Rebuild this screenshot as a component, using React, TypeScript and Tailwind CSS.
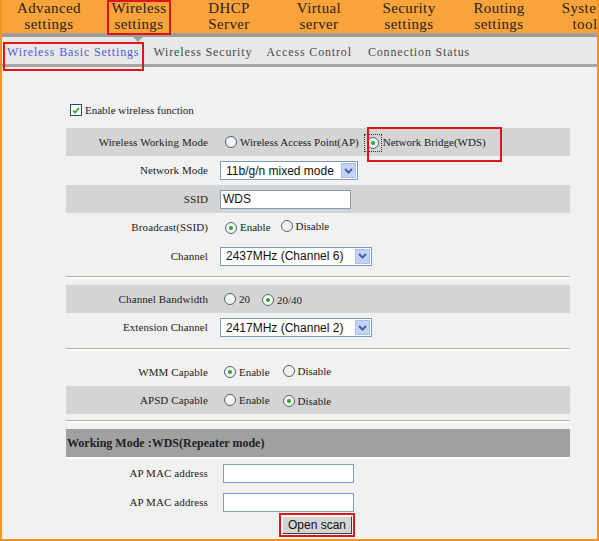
import React from "react";

const Radio = ({ checked }: { checked?: boolean }) => (
  <span className="inline-flex w-[12px] h-[12px] shrink-0 rounded-full border border-[#4a6482] bg-[#f4f4f0] items-center justify-center">
    {checked && <span className="w-[4px] h-[4px] rounded-full bg-[#2ca42c]" />}
  </span>
);

const RadioOpt = ({ checked, label, focus }: { checked?: boolean; label: string; focus?: boolean }) => (
  <span className="inline-flex items-center">
    {focus ? (
      <span className="inline-flex p-[2px] border border-dotted border-[#333]">
        <Radio checked={checked} />
      </span>
    ) : (
      <Radio checked={checked} />
    )}
    <span className={focus ? "ml-[1px]" : "ml-[3px]"}>{label}</span>
  </span>
);

const Chevron = () => (
  <svg width="9" height="6" viewBox="0 0 9 6">
    <path d="M1 1 L4.5 4.5 L8 1" fill="none" stroke="#4d6185" strokeWidth="2" />
  </svg>
);

const Select = ({ value, w }: { value: string; w: string }) => (
  <div className={`relative flex items-center h-[19px] border border-[#7f9db9] bg-white ${w}`}>
    <span className="pl-[5px] text-[12px] text-[#111] font-['Liberation_Sans',Arial,sans-serif] leading-none">
      {value}
    </span>
    <span className="absolute right-[1px] top-[1px] bottom-[1px] w-[15px] bg-[#c1d2fb] border border-[#aac0ee] flex items-center justify-center">
      <Chevron />
    </span>
  </div>
);

const Row = ({ label, gray, h, children, pl }: { label: string; gray?: boolean; h: string; children: React.ReactNode; pl?: string }) => (
  <div className={`flex items-center ${h} ${gray ? "bg-[#d4d4d4]" : ""}`}>
    <div className="w-[142px] text-right shrink-0 tracking-[0.1px]">{label}</div>
    <div className={`flex items-center ${pl ?? "pl-[12px]"}`}>{children}</div>
  </div>
);

const Divider = () => (
  <div>
    <div className="h-px bg-[#b9b29e]" />
    <div className="h-px bg-white" />
  </div>
);

export default function App() {
  const nav = [
    ["Advanced", "settings", "w-[90px]"],
    ["Wireless", "settings", "w-[90px]"],
    ["DHCP", "Server", "w-[90px]"],
    ["Virtual", "server", "w-[90px]"],
    ["Security", "settings", "w-[90px]"],
    ["Routing", "settings", "w-[90px]"],
    ["System", "tool", "w-[82px]"],
  ];
  return (
    <div className="relative w-[599px] h-[541px] overflow-hidden bg-[#f1f1f1] border-x-2 border-b-2 border-[#f39425] font-['Liberation_Serif',serif] text-[#222]">
      {/* top nav */}
      <div className="h-[33px] bg-[#f9a33b] flex pl-[2px] overflow-hidden">
        {nav.map(([a, b, w]) => (
          <div key={a} className={`${w} shrink-0 text-center whitespace-nowrap text-[15px] leading-[16px] tracking-[0.4px] text-[#2a2218]`}>
            <div>{a}</div>
            <div>{b}</div>
          </div>
        ))}
      </div>
      <div className="relative h-[4px] bg-[#9d9d9d]">
        <div className="absolute left-[131px] top-[4px] w-0 h-0 border-l-[5px] border-r-[5px] border-t-[5px] border-l-transparent border-r-transparent border-t-[#9d9d9d]" />
      </div>
      {/* sub nav */}
      <div className="h-[27px] bg-[#e8e8e8] flex items-center pl-[5px] pt-[2px] gap-[14px] text-[12px] tracking-[0.85px] text-[#4a4a4a]">
        <span className="text-[#4d5ed4]">Wireless Basic Settings</span>
        <span>Wireless Security</span>
        <span>Access Control</span>
        <span className="ml-[2px]">Connection Status</span>
      </div>
      <div className="h-[3px] bg-[#a5a5a5]" />

      {/* body */}
      <div className="ml-[64px] w-[504px] text-[11px]">
        <div className="h-[26px] mt-[30px] mb-[5px] flex items-center pl-[4px]">
          <span className="inline-flex w-[12px] h-[12px] border border-[#1c5180] bg-white items-center justify-center">
            <svg width="8" height="7" viewBox="0 0 8 7">
              <path d="M1 3.5 L3 5.5 L7 1" fill="none" stroke="#21a121" strokeWidth="1.6" />
            </svg>
          </span>
          <span className="ml-[3px]">Enable wireless function</span>
        </div>

        <Row label="Wireless Working Mode" gray h="h-[28px]" pl="pl-[17px]">
          <RadioOpt label="Wireless Access Point(AP)" />
          <span className="ml-[5px]">
            <RadioOpt checked focus label="Network Bridge(WDS)" />
          </span>
        </Row>
        <Row label="Network Mode" h="h-[29px]">
          <Select value="11b/g/n mixed mode" w="w-[138px]" />
        </Row>
        <Row label="SSID" gray h="h-[28px]">
          <div className="w-[131px] h-[19px] border border-[#7f9db9] bg-white flex items-center pl-[2px] text-[12px] text-[#111] font-['Liberation_Sans',Arial,sans-serif]">
            WDS
          </div>
        </Row>
        <Row label="Broadcast(SSID)" h="h-[29px]" pl="pl-[17px]">
          <RadioOpt checked label="Enable" />
          <span className="ml-[10px]">
            <RadioOpt label="Disable" />
          </span>
        </Row>
        <Row label="Channel" h="h-[28px]">
          <Select value="2437MHz (Channel 6)" w="w-[152px]" />
        </Row>

        <div className="h-[6px]" />
        <Divider />
        <div className="h-[7px]" />

        <Row label="Channel Bandwidth" gray h="h-[28px]" pl="pl-[16px]">
          <RadioOpt label="20" />
          <span className="ml-[12px]">
            <RadioOpt checked label="20/40" />
          </span>
        </Row>
        <Row label="Extension Channel" h="h-[29px]">
          <Select value="2417MHz (Channel 2)" w="w-[152px]" />
        </Row>

        <div className="h-[6px]" />
        <Divider />
        <div className="h-[8px]" />

        <Row label="WMM Capable" h="h-[28px]" pl="pl-[16px]">
          <RadioOpt checked label="Enable" />
          <span className="ml-[13px]">
            <RadioOpt label="Disable" />
          </span>
        </Row>
        <Row label="APSD Capable" gray h="h-[28px]" pl="pl-[16px]">
          <RadioOpt label="Enable" />
          <span className="ml-[13px]">
            <RadioOpt checked label="Disable" />
          </span>
        </Row>

        <div className="h-[6px]" />
        <Divider />
        <div className="h-[7px]" />

        <div className="h-[28px] bg-[#a0a0a0] flex items-center pl-[1px] text-[12px] font-bold text-[#222]">
          Working Mode :WDS(Repeater mode)
        </div>
        <div className="h-[2px] bg-white" />

        <Row label="AP MAC address" h="h-[29px]" pl="pl-[15px]">
          <div className="w-[131px] h-[19px] border border-[#7f9db9] bg-white" />
        </Row>
        <Row label="AP MAC address" h="h-[28px]" pl="pl-[15px]">
          <div className="w-[131px] h-[19px] border border-[#7f9db9] bg-white" />
        </Row>
        <div className="pl-[213px] -mt-[3px]">
          <span className="inline-flex border-2 border-[#e1141b] p-[1px]">
            <span className="w-[70px] h-[18px] flex items-center justify-center bg-[#d4d4d4] border border-t-white border-l-white border-r-[#404040] border-b-[#404040] text-[12px] text-[#111] font-['Liberation_Sans',Arial,sans-serif]">
              Open scan
            </span>
          </span>
        </div>
      </div>

      {/* annotation boxes */}
      <div className="absolute left-[105px] top-0 w-[64px] h-[35px] border-2 border-[#e1141b]" />
      <div className="absolute left-[1px] top-[42px] w-[141px] h-[29px] border-2 border-[#e1141b]" />
      <div className="absolute left-[365px] top-[127px] w-[135px] h-[35px] border-2 border-[#e1141b]" />
    </div>
  );
}
